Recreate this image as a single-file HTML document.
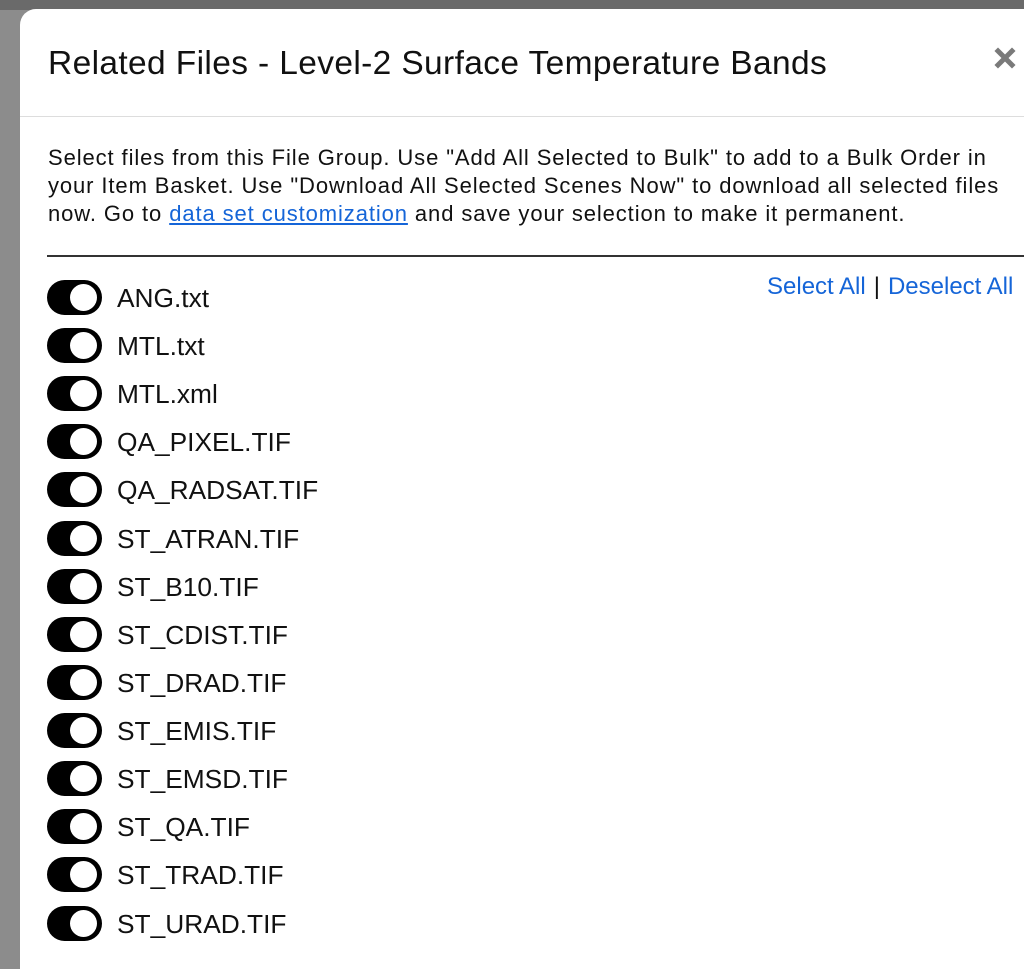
<!DOCTYPE html>
<html><head><meta charset="utf-8"><style>
html,body{margin:0;padding:0;width:1024px;height:969px;overflow:hidden;font-family:"Liberation Sans",Arial,sans-serif;}
body{background:#8c8c8c;position:relative;}
.topbg{position:absolute;left:0;top:0;width:1024px;height:10px;background:#6a6a6a;}
.modal{position:absolute;left:20px;top:9px;width:1020px;height:980px;background:#fff;border-radius:16px 0 0 0;}
h1{position:absolute;left:28px;top:36px;margin:0;font-size:33.5px;font-weight:normal;color:#111;white-space:nowrap;letter-spacing:0.37px;}
.close{position:absolute;left:974px;top:38px;}
.hr1{position:absolute;left:0;top:107px;width:1004px;height:1px;background:#ddd;}
.p{position:absolute;left:28px;top:135px;width:990px;font-size:22px;line-height:28px;color:#111;white-space:nowrap;letter-spacing:0.9px;}
.p a{color:#1565d8;text-decoration:underline;}
.hr2{position:absolute;left:27px;top:246px;width:980px;height:1.5px;background:#333;}
.links{position:absolute;left:747px;top:264px;font-size:24px;color:#1565d8;white-space:nowrap;}
.links span{color:#111;margin:0 8px;}
.row{position:absolute;left:27px;height:35px;}
.tg{position:absolute;left:0;top:0;width:55px;height:35px;background:#000;border-radius:18px;}
.tg:after{content:"";position:absolute;left:23px;top:4px;width:27px;height:27px;background:#fff;border-radius:50%;}
.lbl{position:absolute;left:70px;top:1px;font-size:26.3px;color:#111;white-space:nowrap;line-height:34px;}
</style></head><body>
<div class="topbg"></div>
<div class="modal">
<h1>Related Files - Level-2 Surface Temperature Bands</h1>
<svg class="close" width="22" height="22" viewBox="0 0 22 22"><path d="M4 4L18 18M18 4L4 18" stroke="#7a7a7a" stroke-width="5" stroke-linecap="square"/></svg>
<div class="hr1"></div>
<div class="p">Select files from this File Group. Use "Add All Selected to Bulk" to add to a Bulk Order in<br>your Item Basket. Use "Download All Selected Scenes Now" to download all selected files<br>now. Go to <a>data set customization</a> and save your selection to make it permanent.</div>
<div class="hr2"></div>
<div class="links">Select All<span>|</span>Deselect All</div>
<div class="row" style="top:271px"><div class="tg"></div><div class="lbl">ANG.txt</div></div>
<div class="row" style="top:319px"><div class="tg"></div><div class="lbl">MTL.txt</div></div>
<div class="row" style="top:367px"><div class="tg"></div><div class="lbl">MTL.xml</div></div>
<div class="row" style="top:415px"><div class="tg"></div><div class="lbl">QA_PIXEL.TIF</div></div>
<div class="row" style="top:463px"><div class="tg"></div><div class="lbl">QA_RADSAT.TIF</div></div>
<div class="row" style="top:512px"><div class="tg"></div><div class="lbl">ST_ATRAN.TIF</div></div>
<div class="row" style="top:560px"><div class="tg"></div><div class="lbl">ST_B10.TIF</div></div>
<div class="row" style="top:608px"><div class="tg"></div><div class="lbl">ST_CDIST.TIF</div></div>
<div class="row" style="top:656px"><div class="tg"></div><div class="lbl">ST_DRAD.TIF</div></div>
<div class="row" style="top:704px"><div class="tg"></div><div class="lbl">ST_EMIS.TIF</div></div>
<div class="row" style="top:752px"><div class="tg"></div><div class="lbl">ST_EMSD.TIF</div></div>
<div class="row" style="top:800px"><div class="tg"></div><div class="lbl">ST_QA.TIF</div></div>
<div class="row" style="top:848px"><div class="tg"></div><div class="lbl">ST_TRAD.TIF</div></div>
<div class="row" style="top:897px"><div class="tg"></div><div class="lbl">ST_URAD.TIF</div></div>
</div>
</body></html>
